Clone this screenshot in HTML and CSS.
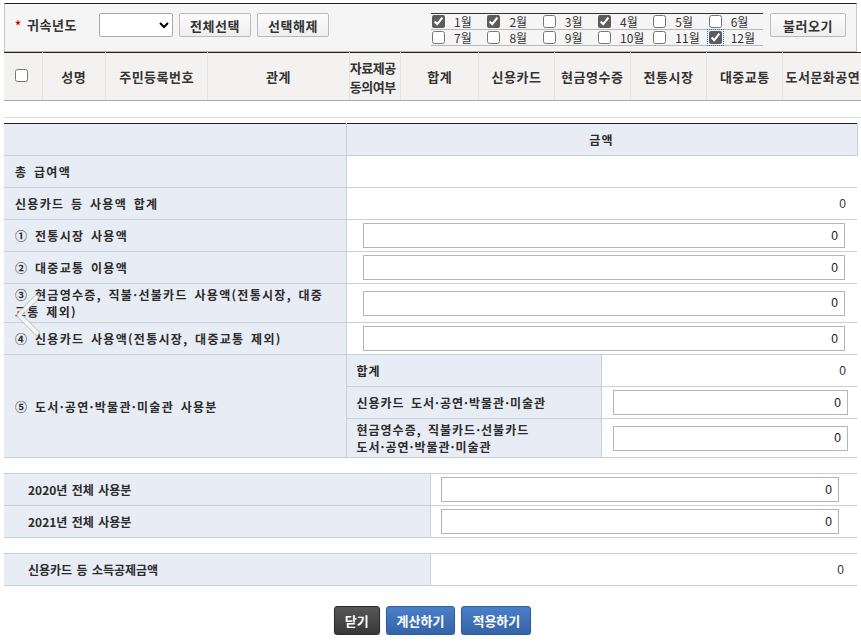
FILE: index.html
```html
<!DOCTYPE html>
<html lang="ko">
<head>
    <meta charset="utf-8">
    <title>신용카드 등 소득공제</title>
    <link rel="stylesheet" href="styles.css">
</head>
<body>
<div class="page">
    <div class="topbar">
        <span class="req">*</span>
        <span class="year-label">귀속년도</span>
        <select class="year-select"><option></option></select>
        <button class="btn">전체선택</button>
        <button class="btn">선택해제</button>
        <table class="months">
            <tr>
                <td class="mchk"><input type="checkbox" checked></td><td class="mlbl">1월</td>
                <td class="mchk"><input type="checkbox" checked></td><td class="mlbl">2월</td>
                <td class="mchk"><input type="checkbox"></td><td class="mlbl">3월</td>
                <td class="mchk"><input type="checkbox" checked></td><td class="mlbl">4월</td>
                <td class="mchk"><input type="checkbox"></td><td class="mlbl">5월</td>
                <td class="mchk"><input type="checkbox"></td><td class="mlbl">6월</td>
            </tr>
            <tr>
                <td class="mchk"><input type="checkbox"></td><td class="mlbl">7월</td>
                <td class="mchk"><input type="checkbox"></td><td class="mlbl">8월</td>
                <td class="mchk"><input type="checkbox"></td><td class="mlbl">9월</td>
                <td class="mchk"><input type="checkbox"></td><td class="mlbl">10월</td>
                <td class="mchk"><input type="checkbox"></td><td class="mlbl">11월</td>
                <td class="mchk"><input type="checkbox" class="focused" checked></td><td class="mlbl">12월</td>
            </tr>
        </table>
        <button class="btn btn-load">불러오기</button>
    </div>

    <div class="list-wrap">
        <table class="list">
            <colgroup>
                <col class="w38"><col class="w63"><col class="w102"><col class="w141"><col class="w51">
                <col class="w78"><col class="w75"><col class="w76"><col class="w76"><col class="w76"><col class="w120">
            </colgroup>
            <thead>
                <tr>
                    <th><input type="checkbox"></th>
                    <th>성명</th>
                    <th>주민등록번호</th>
                    <th>관계</th>
                    <th class="two-line">자료제공<br>동의여부</th>
                    <th>합계</th>
                    <th>신용카드</th>
                    <th>현금영수증</th>
                    <th>전통시장</th>
                    <th>대중교통</th>
                    <th class="cut">도서문화공연</th>
                </tr>
            </thead>
            <tbody>
                <tr class="empty"><td colspan="11"></td></tr>
            </tbody>
        </table>
    </div>

    <table class="form">
        <colgroup><col class="c-label"><col class="c-sub"><col class="c-val"></colgroup>
        <tr>
            <th class="head"></th>
            <th class="head center" colspan="2">금액</th>
        </tr>
        <tr>
            <th>총 급여액</th>
            <td class="val" colspan="2"></td>
        </tr>
        <tr>
            <th>신용카드 등 사용액 합계</th>
            <td class="val num" colspan="2">0</td>
        </tr>
        <tr>
            <th>① 전통시장 사용액</th>
            <td class="val inp" colspan="2"><input class="amount" value="0"></td>
        </tr>
        <tr>
            <th>② 대중교통 이용액</th>
            <td class="val inp" colspan="2"><input class="amount" value="0"></td>
        </tr>
        <tr>
            <th class="tall">③ 현금영수증, 직불·선불카드 사용액(전통시장, 대중<br>교통 제외)</th>
            <td class="val inp" colspan="2"><input class="amount" value="0"></td>
        </tr>
        <tr>
            <th>④ 신용카드 사용액(전통시장, 대중교통 제외)</th>
            <td class="val inp" colspan="2"><input class="amount" value="0"></td>
        </tr>
        <tr>
            <th rowspan="3">⑤ 도서·공연·박물관·미술관 사용분</th>
            <th class="sub">합계</th>
            <td class="val num">0</td>
        </tr>
        <tr>
            <th class="sub">신용카드 도서·공연·박물관·미술관</th>
            <td class="val inp-sub"><input class="amount" value="0"></td>
        </tr>
        <tr>
            <th class="sub tall">현금영수증, 직불카드·선불카드<br>도서·공연·박물관·미술관</th>
            <td class="val inp-sub"><input class="amount" value="0"></td>
        </tr>
    </table>

    <table class="form form-half">
        <colgroup><col class="c-half"><col class="c-half"></colgroup>
        <tr>
            <th>2020년 전체 사용분</th>
            <td class="val inp-half"><input class="amount" value="0"></td>
        </tr>
        <tr>
            <th>2021년 전체 사용분</th>
            <td class="val inp-half"><input class="amount" value="0"></td>
        </tr>
    </table>

    <table class="form form-half">
        <colgroup><col class="c-half"><col class="c-half"></colgroup>
        <tr>
            <th>신용카드 등 소득공제금액</th>
            <td class="val num num-half">0</td>
        </tr>
    </table>

    <div class="actions">
        <button class="act act-dark">닫기</button>
        <button class="act act-blue">계산하기</button>
        <button class="act act-blue">적용하기</button>
    </div>

    <svg class="pager-arrow" width="30" height="42" viewBox="0 0 30 42">
        <polyline points="24,3 6,21 24,39" fill="none" stroke="#b8b8b8" stroke-width="6" stroke-linecap="round" stroke-linejoin="round" opacity="0.55"/>
        <polyline points="24,3 6,21 24,39" fill="none" stroke="#ffffff" stroke-width="3.5" stroke-linecap="round" stroke-linejoin="round" opacity="0.85"/>
    </svg>
</div>
</body>
</html>
```

FILE: styles.css
```css
body {
    margin: 0;
    background: #fff;
    color: #333;
    font-family: "Noto Sans CJK KR", "Liberation Sans", sans-serif;
    font-size: 12px;
}

.page {
    position: relative;
    width: 853px;
    padding: 3px 0 0 4px;
}

/* top search bar */
.topbar {
    display: flex;
    align-items: flex-start;
    box-sizing: border-box;
    width: 853px;
    height: 49px;
    padding: 9px 0 0 10px;
    background: #f5f5f5;
    border-top: 1px solid #222;
    border-left: 1px solid #c8c8c8;
    border-right: 1px solid #c8c8c8;
    border-bottom: 1px solid #b5b5b5;
}

.topbar > * {
    flex-shrink: 0;
}

.req {
    width: 12px;
    color: #d00;
    font-weight: bold;
    line-height: 24px;
}

.year-label {
    width: 72px;
    font-size: 13px;
    font-weight: bold;
    line-height: 24px;
    color: #333;
    letter-spacing: 0.5px;
}

.year-select {
    width: 74px;
    height: 24px;
    margin: 0 6px 0 0;
    border: 1px solid #aaa;
    border-radius: 2px;
    background: #fff;
}

.btn {
    width: 72px;
    height: 24px;
    margin: 0 6px 0 0;
    padding: 0;
    font-family: inherit;
    font-size: 13px;
    font-weight: bold;
    color: #333;
    letter-spacing: 0.5px;
    background: linear-gradient(#fdfdfd, #eeeeee);
    border: 1px solid #bbb;
    border-radius: 2px;
}

.months {
    margin: 0 0 0 96px;
    border-collapse: collapse;
    border-top: 1px solid #333;
    border-bottom: 1px solid #b8b8b8;
    width: 332px;
    table-layout: fixed;
}

.months tr + tr td {
    border-top: 1px solid #b8b8b8;
}

.months td {
    padding: 0;
    height: 15px;
    line-height: 15px;
}

.mchk {
    width: 20px;
}

.mchk input {
    display: block;
    width: 13px;
    height: 13px;
    margin: 0 0 0 1px;
    accent-color: #5c5c5c;
}

.mchk input.focused {
    outline: 1px dotted #2a6fd6;
    outline-offset: 1px;
}

.mlbl {
    width: 32px;
    padding-left: 3px !important;
    font-size: 12px;
    color: #333;
    overflow: hidden;
    white-space: nowrap;
}

.btn-load {
    width: 76px;
    margin-left: 7px;
}

/* employee list header */
.list-wrap {
    width: 857px;
    overflow: hidden;
}

.list {
    width: 900px;
    table-layout: fixed;
    border-collapse: collapse;
}

.w38 { width: 38px; }
.w63 { width: 63px; }
.w102 { width: 102px; }
.w141 { width: 141px; }
.w51 { width: 51px; }
.w78 { width: 78px; }
.w75 { width: 75px; }
.w76 { width: 76px; }
.w120 { width: 120px; }

.list th {
    height: 47px;
    padding: 0;
    background: #f3f2f1;
    border-top: 1px solid #222;
    border-right: 1px solid #e6e4e2;
    border-bottom: 1px solid #a8a8a8;
    font-size: 13px;
    font-weight: bold;
    color: #333;
    text-align: center;
    white-space: nowrap;
    letter-spacing: 0.5px;
}

.list th input {
    width: 13px;
    height: 13px;
    margin: 0 0 0 -2px;
}

.list th.two-line {
    text-align: left;
    line-height: 19px;
    letter-spacing: -0.5px;
}

.list th.cut {
    text-align: left;
    padding-left: 2px;
}

.list .empty td {
    height: 16px;
    padding: 0;
    border-bottom: 1px solid #dcdcdc;
}

/* amount form tables */
.form {
    width: 853px;
    table-layout: fixed;
    border-collapse: collapse;
    margin-top: 5px;
    border-top: 1px solid #222;
}

.c-label { width: 342px; }
.c-sub { width: 255px; }
.c-val { width: 256px; }
.c-half { width: 426px; }

.form th,
.form td {
    height: 32px;
    padding: 2px 11px;
    border-bottom: 1px solid #c6cfdc;
    box-sizing: border-box;
}

.form th {
    text-align: left;
    font-weight: bold;
    font-size: 12px;
    line-height: 17px;
    color: #2b2b2b;
    letter-spacing: 1.3px;
    word-spacing: 2px;
    background: #e8ecf4;
    border-right: 1px solid #c6cfdc;
}

.form th.tall {
    height: 38px;
}

.form th.head {
    height: 32px;
}

.form th.center {
    text-align: center;
}

.form th.sub {
    padding-left: 10px;
    letter-spacing: 1px;
}

.form td.val {
    background: #fff;
}

.form td.num {
    text-align: right;
    padding-right: 11px;
    font-family: "Liberation Sans", sans-serif;
}

.form td.inp {
    padding: 0 12px 0 16px;
}

.form td.inp-sub {
    padding: 0 9px 0 11px;
}

.amount {
    display: block;
    box-sizing: border-box;
    width: 100%;
    height: 25px;
    margin: 0;
    padding: 0 6px;
    border: 1px solid #b5b5b5;
    background: #fff;
    text-align: right;
    font-family: "Liberation Sans", sans-serif;
    font-size: 12px;
    color: #111;
}

.form-half {
    margin-top: 15px;
    border-top: 1px solid #c6cfdc;
}

.form-half th {
    padding-left: 24px;
    letter-spacing: 0;
    word-spacing: 1px;
}

.form td.inp-half {
    padding: 0 18px 0 10px;
}

.form td.num-half {
    padding-right: 13px;
}

/* bottom actions */
.actions {
    display: flex;
    justify-content: center;
    gap: 6px;
    margin-top: 20px;
    padding-left: 4px;
}

.act {
    height: 29px;
    padding: 0 10px;
    font-family: inherit;
    font-size: 13px;
    font-weight: bold;
    color: #fff;
    border-radius: 3px;
    box-shadow: 0 1px 1px rgba(0, 0, 0, 0.35);
}

.act-dark {
    background: linear-gradient(#575757, #383838);
    border: 1px solid #2b2b2b;
}

.act-blue {
    background: linear-gradient(#4a7fc6, #3563a8);
    border: 1px solid #2f5c9e;
}

.pager-arrow {
    position: absolute;
    left: 13px;
    top: 294px;
}
```
